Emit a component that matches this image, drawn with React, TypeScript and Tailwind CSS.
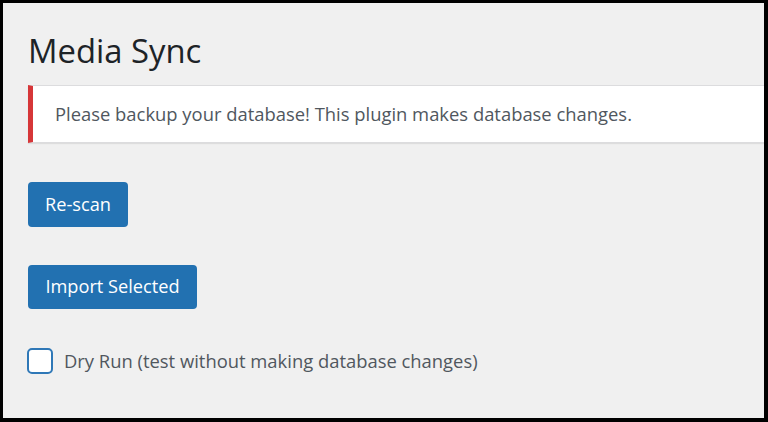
export default function App() {
  return (
    <div
      className="w-[768px] h-[422px] overflow-hidden border-t-[3px] border-l-[3px] border-r-4 border-b-4 border-black bg-[#f0f0f0]"
      style={{ fontFamily: '"Open Sans", "Noto Sans", sans-serif' }}
    >
      <div className="pl-[25px] pt-[26px] flex flex-col">
        <h1 className="text-[32.8px] leading-[44px] font-normal text-[#1d2327]">Media Sync</h1>

        {/* notice */}
        <div className="mt-[12px] h-[58px] flex items-center bg-white border-l-[5px] border-[#d63638] shadow-[0_1px_1px_rgba(0,0,0,0.08)] border-y border-y-[#dcdcde]">
          <p className="pl-[22px] text-[18.4px] text-[#50575e]">
            Please backup your database! This plugin makes database changes.
          </p>
        </div>

        <div className="mt-[39px]">
          <button className="w-[100px] h-[45px] rounded-[4px] bg-[#2271b1] text-white text-[18.2px]">
            Re-scan
          </button>
        </div>

        <div className="mt-[38px]">
          <button className="w-[169px] h-[44px] rounded-[4px] bg-[#2271b1] text-white text-[18.2px]">
            Import Selected
          </button>
        </div>

        <label className="mt-[38px] flex items-center gap-[11px]">
          <span className="w-[26px] h-[26px] rounded-[5px] border-[2.5px] border-[#2f78b7] bg-white -ml-[1px]" />
          <span className="text-[18.4px] text-[#50575e]">Dry Run (test without making database changes)</span>
        </label>
      </div>
    </div>
  );
}
